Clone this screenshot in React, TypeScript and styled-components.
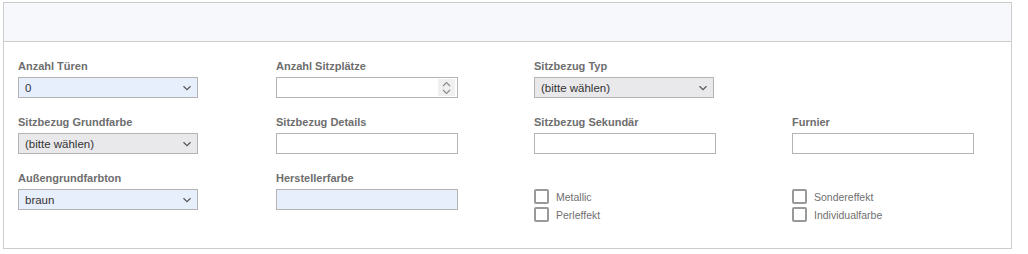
import styled, { createGlobalStyle } from "styled-components"

const GlobalStyle = createGlobalStyle`
  html, body {
    margin: 0;
    padding: 0;
    background: #ffffff;
    font-family: "Liberation Sans", Arial, sans-serif;
  }
`

type Tone = "blue" | "grey" | "white"

const bg: Record<Tone, string> = {
  blue: "#e8effc",
  grey: "#e9e9ec",
  white: "#ffffff",
}

const Style = {
  Page: styled.div`
    padding: 2px 16px 0 3px;
  `,
  Panel: styled.div`
    width: 1007px;
    border: 1px solid #cccccc;
    background: #ffffff;
  `,
  Header: styled.div`
    height: 38px;
    background: #f7f8fc;
    border-bottom: 1px solid #cccccc;
  `,
  Body: styled.div`
    padding: 17px 14px 26px;
    display: grid;
    grid-template-columns: repeat(4, 258px);
    row-gap: 17px;
  `,
  Field: styled.div`
    display: flex;
    flex-direction: column;
  `,
  Label: styled.div`
    height: 14px;
    line-height: 14px;
    margin-bottom: 4px;
    font-size: 11px;
    font-weight: bold;
    color: #6e6e6e;
    white-space: nowrap;
  `,
  Select: styled.div<{ $tone: Tone }>`
    box-sizing: border-box;
    width: 180px;
    height: 21px;
    border: 1px solid #b4b4b4;
    background: ${(p) => bg[p.$tone]};
    display: flex;
    align-items: center;
    padding: 0 5px 0 6px;
    font-size: 11.5px;
    color: #333333;
  `,
  SelectText: styled.span`
    flex: 1;
    white-space: nowrap;
  `,
  Input: styled.div<{ $tone: Tone }>`
    position: relative;
    box-sizing: border-box;
    width: 182px;
    height: 21px;
    border: 1px solid #b4b4b4;
    background: ${(p) => bg[p.$tone]};
  `,
  Spinner: styled.div`
    position: absolute;
    right: 2px;
    top: 1px;
    bottom: 1px;
    width: 17px;
    background: #f0f0f0;
    display: flex;
    align-items: center;
    justify-content: center;
  `,
  Checks: styled.div`
    padding-top: 18px;
    display: flex;
    flex-direction: column;
    gap: 3px;
  `,
  Check: styled.label`
    display: flex;
    align-items: center;
    gap: 7px;
    height: 15px;
    font-size: 10.5px;
    color: #707070;
  `,
  Box: styled.span`
    box-sizing: border-box;
    width: 15px;
    height: 15px;
    border: 2px solid #999999;
    border-radius: 2px;
    background: #ffffff;
  `,
}

function Chevron() {
  return (
    <svg width="10" height="6" viewBox="0 0 10 6">
      <path d="M1.5 1.2 L5 4.6 L8.5 1.2" fill="none" stroke="#555" strokeWidth="1.2" />
    </svg>
  )
}

function SelectField({ label, value, tone }: { label: string; value: string; tone: Tone }) {
  return (
    <Style.Field>
      <Style.Label>{label}</Style.Label>
      <Style.Select $tone={tone}>
        <Style.SelectText>{value}</Style.SelectText>
        <Chevron />
      </Style.Select>
    </Style.Field>
  )
}

function InputField({
  label,
  tone = "white",
  spinner,
}: {
  label: string
  tone?: Tone
  spinner?: boolean
}) {
  return (
    <Style.Field>
      <Style.Label>{label}</Style.Label>
      <Style.Input $tone={tone}>
        {spinner && (
          <Style.Spinner>
            <svg width="9" height="14" viewBox="0 0 9 14">
              <path d="M1 5 L4.5 1.5 L8 5" fill="none" stroke="#888" strokeWidth="1.1" />
              <path d="M1 9 L4.5 12.5 L8 9" fill="none" stroke="#888" strokeWidth="1.1" />
            </svg>
          </Style.Spinner>
        )}
      </Style.Input>
    </Style.Field>
  )
}

function CheckGroup({ items }: { items: string[] }) {
  return (
    <Style.Checks>
      {items.map((item) => (
        <Style.Check key={item}>
          <Style.Box />
          {item}
        </Style.Check>
      ))}
    </Style.Checks>
  )
}

export default function App() {
  return (
    <>
      <GlobalStyle />
      <Style.Page>
        <Style.Panel>
          <Style.Header />
          <Style.Body>
            <SelectField label="Anzahl Türen" value="0" tone="blue" />
            <InputField label="Anzahl Sitzplätze" spinner />
            <SelectField label="Sitzbezug Typ" value="(bitte wählen)" tone="grey" />
            <div />

            <SelectField label="Sitzbezug Grundfarbe" value="(bitte wählen)" tone="grey" />
            <InputField label="Sitzbezug Details" />
            <InputField label="Sitzbezug Sekundär" />
            <InputField label="Furnier" />

            <SelectField label="Außengrundfarbton" value="braun" tone="blue" />
            <InputField label="Herstellerfarbe" tone="blue" />
            <CheckGroup items={["Metallic", "Perleffekt"]} />
            <CheckGroup items={["Sondereffekt", "Individualfarbe"]} />
          </Style.Body>
        </Style.Panel>
      </Style.Page>
    </>
  )
}
